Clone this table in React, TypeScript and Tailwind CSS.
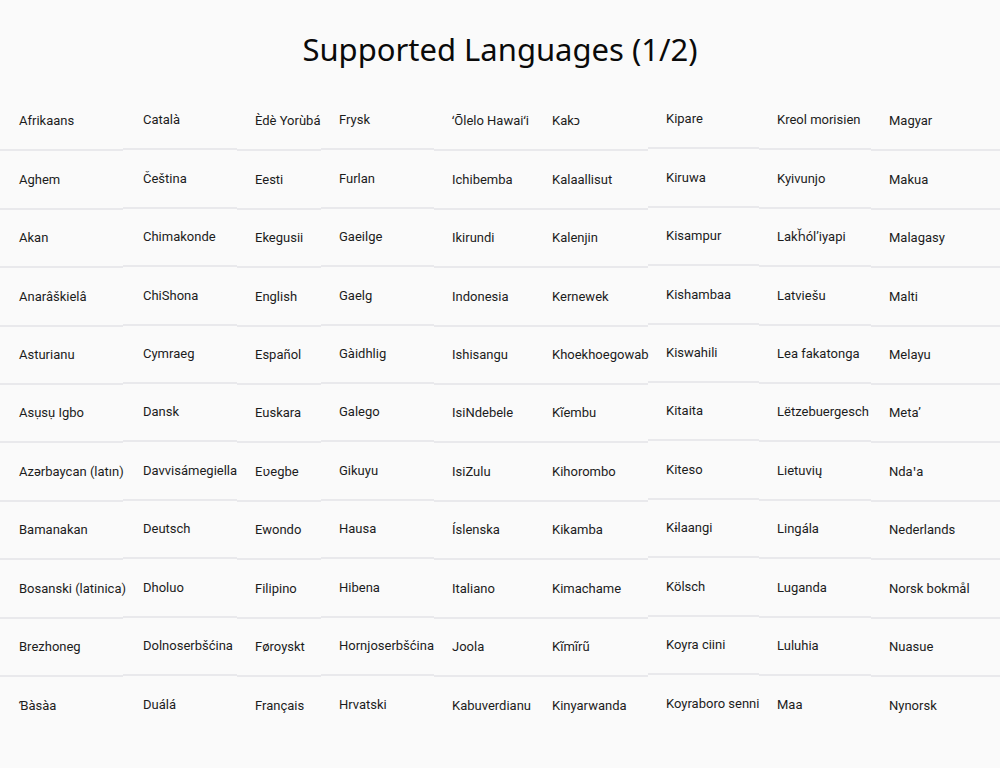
import React from "react";

const columns: { w: string; pl: string; off: string; items: string[] }[] = [
  { w: "w-[123px]", pl: "pl-[19px]", off: "mt-0", items: ["Afrikaans", "Aghem", "Akan", "Anarâškielâ", "Asturianu", "Asụsụ Igbo", "Azərbaycan (latın)", "Bamanakan", "Bosanski (latinica)", "Brezhoneg", "Ɓàsàa"] },
  { w: "w-[114px]", pl: "pl-[20px]", off: "-mt-px", items: ["Català", "Čeština", "Chimakonde", "ChiShona", "Cymraeg", "Dansk", "Davvisámegiella", "Deutsch", "Dholuo", "Dolnoserbšćina", "Duálá"] },
  { w: "w-[84px]", pl: "pl-[18px]", off: "mt-0", items: ["Èdè Yorùbá", "Eesti", "Ekegusii", "English", "Español", "Euskara", "Eʋegbe", "Ewondo", "Filipino", "Føroyskt", "Français"] },
  { w: "w-[113px]", pl: "pl-[18px]", off: "-mt-px", items: ["Frysk", "Furlan", "Gaeilge", "Gaelg", "Gàidhlig", "Galego", "Gikuyu", "Hausa", "Hibena", "Hornjoserbšćina", "Hrvatski"] },
  { w: "w-[101px]", pl: "pl-[18px]", off: "mt-0", items: ["ʻŌlelo Hawaiʻi", "Ichibemba", "Ikirundi", "Indonesia", "Ishisangu", "IsiNdebele", "IsiZulu", "Íslenska", "Italiano", "Joola", "Kabuverdianu"] },
  { w: "w-[113px]", pl: "pl-[17px]", off: "mt-0", items: ["Kakɔ", "Kalaallisut", "Kalenjin", "Kernewek", "Khoekhoegowab", "Kĩembu", "Kihorombo", "Kikamba", "Kimachame", "Kĩmĩrũ", "Kinyarwanda"] },
  { w: "w-[111px]", pl: "pl-[18px]", off: "-mt-[2px]", items: ["Kipare", "Kiruwa", "Kisampur", "Kishambaa", "Kiswahili", "Kitaita", "Kiteso", "Kɨlaangi", "Kölsch", "Koyra ciini", "Koyraboro senni"] },
  { w: "w-[112px]", pl: "pl-[18px]", off: "-mt-px", items: ["Kreol morisien", "Kyivunjo", "Lakȟólʼiyapi", "Latviešu", "Lea fakatonga", "Lëtzebuergesch", "Lietuvių", "Lingála", "Luganda", "Luluhia", "Maa"] },
  { w: "w-[129px]", pl: "pl-[18px]", off: "mt-0", items: ["Magyar", "Makua", "Malagasy", "Malti", "Melayu", "Metaʼ", "Ndaꞌa", "Nederlands", "Norsk bokmål", "Nuasue", "Nynorsk"] },
];

export default function App() {
  return (
    <div className="w-[1000px] h-[768px] bg-[#fafafa] overflow-hidden">
      <div className="h-[93px] flex items-center justify-center pt-[6px]">
        <h1 className="text-[31px] leading-none text-[#0a0a0a]" style={{ fontFamily: '"Noto Sans", sans-serif' }}>
          Supported Languages (1/2)
        </h1>
      </div>
      <div className="flex" style={{ fontFamily: 'Roboto, "Noto Sans", sans-serif' }}>
        {columns.map((col, ci) => (
          <div key={ci} className={`${col.w} shrink-0 flex flex-col ${col.off}`}>
            {col.items.map((item, ri) => (
              <div
                key={ri}
                className={`h-[58.4px] flex items-center ${col.pl} text-[13px] text-[#1c1c1c] whitespace-nowrap ${ri < col.items.length - 1 ? "border-b-2 border-[#e9e9ec]" : ""}`}
              >
                {item}
              </div>
            ))}
          </div>
        ))}
      </div>
    </div>
  );
}
